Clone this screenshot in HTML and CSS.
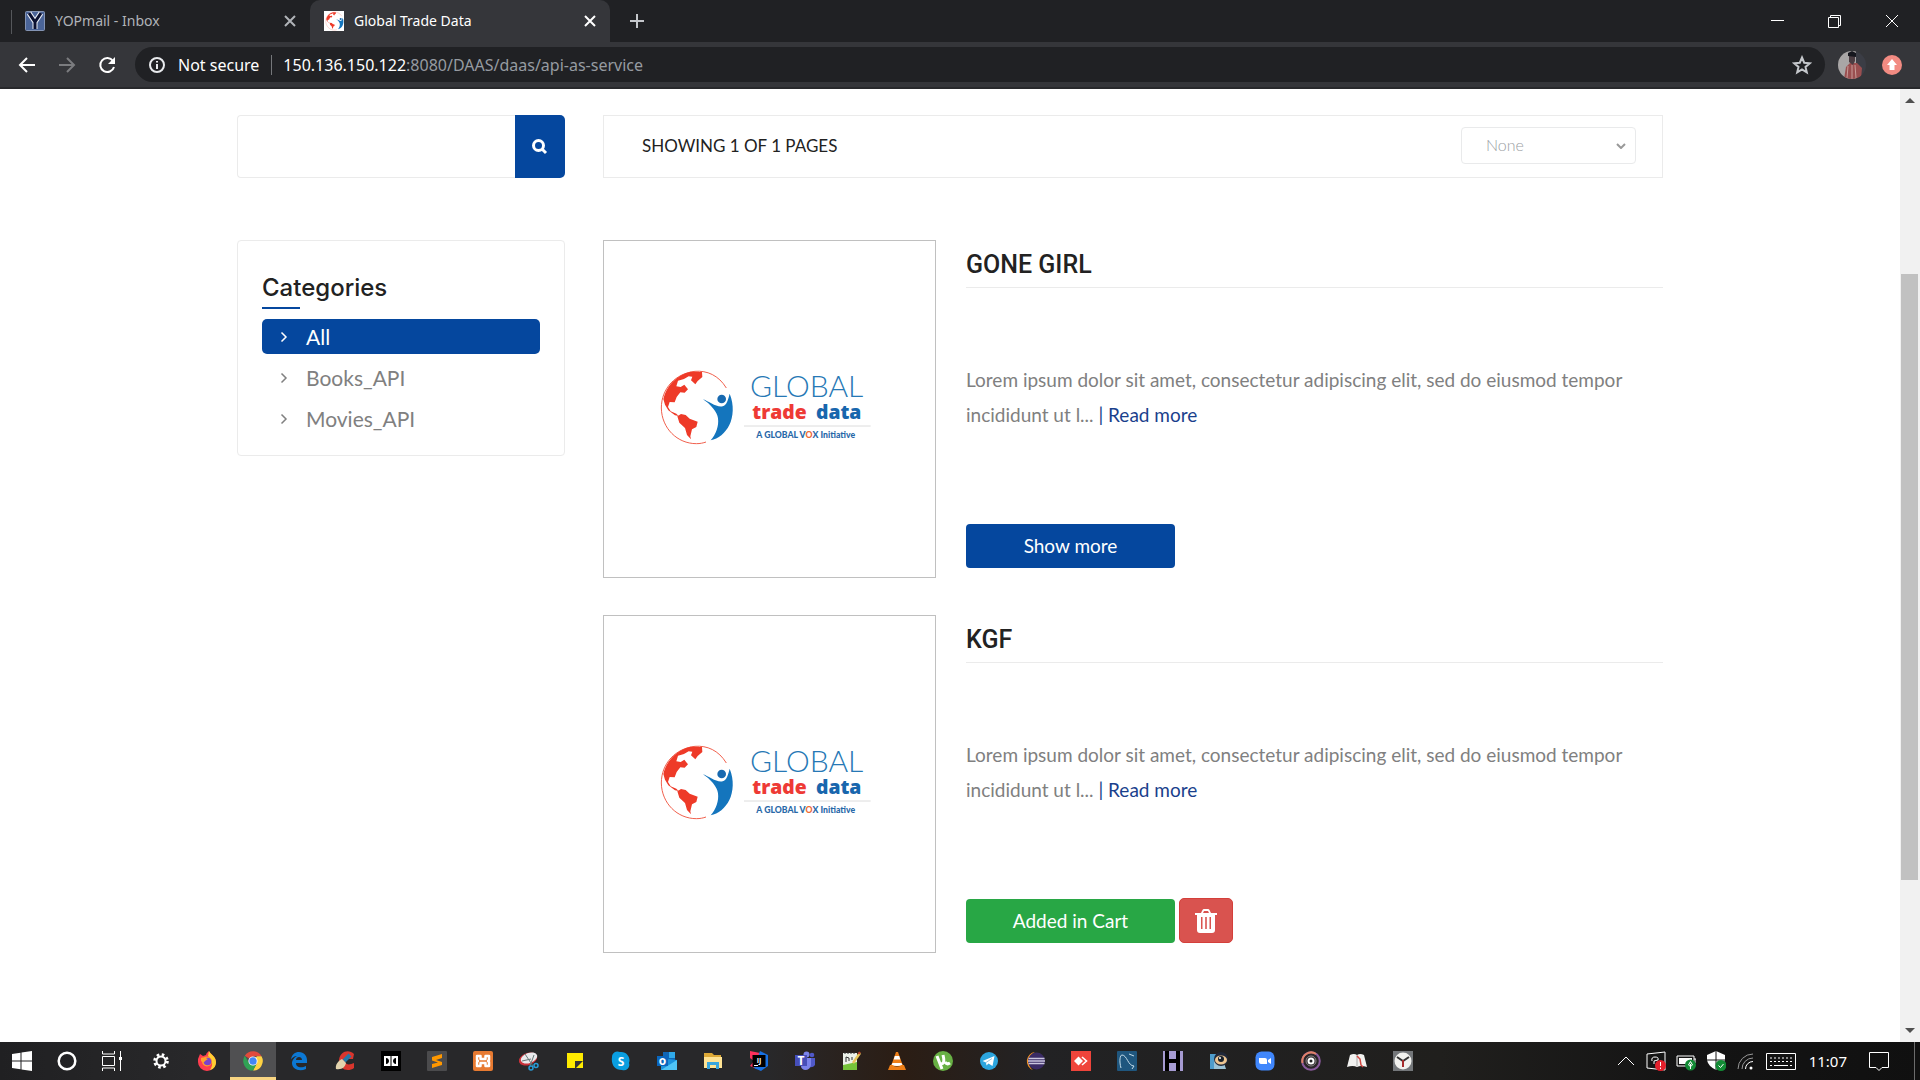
FILE: index.html
```html
<!DOCTYPE html>
<html lang="en">
<head>
<meta charset="utf-8">
<title>Global Trade Data</title>
<link rel="stylesheet" href="styles.css">
</head>
<body>
<svg class="defs" aria-hidden="true">
  <symbol id="globe" viewBox="25 25 230 232">
    <path d="M229 84C206 46 171 31 135 34C78 40 34 84 34 144C35 205 82 251 139 251C150 251 160 249 168 246" fill="none" stroke="#f0604d" stroke-width="3"/>
    <path d="M40 117C49 78 79 45 122 35L156 36L157 51L143 63L136 73L123 61L127 50L116 49L102 57L84 62L79 79L92 81L103 74L114 88L104 98L91 97L80 111L74 127L59 126L54 141L62 154L79 161L86 168L75 166L55 151L45 134Z" fill="#ee3a28"/>
    <path d="M82 169L93 162L107 165L119 176L143 185L139 201L126 208L121 229L123 238L111 225L105 204L88 188Z" fill="#ee3a28"/>
    <circle cx="215" cy="117" r="13" fill="#1769b0"/>
    <path d="M159 118C177 124 199 143 218 139C230 136 235 117 239 101C253 134 250 171 238 195C226 219 205 237 182 241C198 224 207 198 204 175C202 156 181 132 159 118Z" fill="#1475bd"/>
  </symbol>
  <symbol id="chev" viewBox="0 0 8 12"><path d="M1.500 1.500 6 6 1.500 10.500" fill="none" stroke="currentColor" stroke-width="1.500"/></symbol>
</svg>

<header class="browser">
  <div class="tabs">
    <div class="tab">
      <svg class="favicon" viewBox="0 0 20 20"><rect width="20" height="20" rx="2" fill="#8494b4"/><rect x="1" y="1" width="18" height="18" fill="#4a6498"/><path d="M4 2 10 11V18M16 2 10 11" stroke="#e8ecf4" stroke-width="5" fill="none"/><path d="M4 2 10 11V18M16 2 10 11" stroke="#0a1030" stroke-width="3" fill="none"/></svg>
      <span class="tab-title">YOPmail - Inbox</span>
      <button class="tab-close" aria-label="Close tab"><svg viewBox="0 0 12 12"><path d="M1 1 11 11M11 1 1 11"/></svg></button>
    </div>
    <div class="tab tab-active">
      <svg class="favicon" viewBox="0 0 20 20"><rect width="20" height="20" fill="#fff"/><svg x="1" y="0" width="19" height="20"><use href="#globe"/></svg></svg>
      <span class="tab-title">Global Trade Data</span>
      <button class="tab-close" aria-label="Close tab"><svg viewBox="0 0 12 12"><path d="M1 1 11 11M11 1 1 11"/></svg></button>
    </div>
    <button class="new-tab" aria-label="New tab"><svg viewBox="0 0 16 16"><path d="M8 1V15M1 8H15"/></svg></button>
    <div class="window-controls">
      <button aria-label="Minimize"><svg viewBox="0 0 14 14"><path d="M0 6.500H13"/></svg></button>
      <button aria-label="Restore"><svg viewBox="0 0 14 14"><path d="M.5 3.500H10.500V13.500H.5ZM2.500 3.500V1.500H12.500V11.500H10.500"/></svg></button>
      <button aria-label="Close"><svg viewBox="0 0 14 14"><path d="M1 1 13 13M13 1 1 13"/></svg></button>
    </div>
  </div>
  <div class="toolbar">
    <button class="nav" aria-label="Back"><svg viewBox="0 0 20 20"><path d="M18 10H3M10 3 3 10 10 17"/></svg></button>
    <button class="nav nav-off" aria-label="Forward"><svg viewBox="0 0 20 20"><path d="M2 10H17M10 3 17 10 10 17"/></svg></button>
    <button class="nav" aria-label="Reload"><svg viewBox="0 0 20 20"><path d="M16 6A7 7 0 1 0 17 12"/><path d="M18 2V9H11Z" class="solid"/></svg></button>
    <div class="omnibox">
      <svg class="info" viewBox="0 0 18 18"><circle cx="9" cy="9" r="7"/><path d="M9 8V13M9 5V6.500"/></svg>
      <span class="secure">Not secure</span>
      <span class="url"><span class="host">150.136.150.122</span><span>:8080/DAAS/daas/api-as-service</span></span>
      <svg class="star" viewBox="0 0 20 20"><path d="M10 2.500 12.200 7.700 17.800 8.200 13.500 11.900 14.800 17.300 10 14.400 5.200 17.300 6.500 11.900 2.200 8.200 7.800 7.700Z"/></svg>
    </div>
    <svg class="avatar" viewBox="0 0 28 28"><defs><clipPath id="round"><circle cx="14" cy="14" r="14"/></clipPath></defs><g clip-path="url(#round)"><path fill="#a9a6a6" d="M0 0H18V28H0Z"/><path fill="#3b3d45" d="M18 0H28V28H18Z"/><path fill="#9a4f50" d="M6 28 8 16 12 12H19L24 17 23 28Z"/><path d="M10 15 9 27M14 14V28M17 14 18 27" stroke="#c79c98"/><path fill="#4b3d42" d="M11 5H17V10L15 14 11 11Z"/><path fill="#16171e" d="M10 2 14 0 18 2V6L10 5Z"/></g></svg>
    <svg class="update" viewBox="0 0 20 20"><circle cx="10" cy="10" r="10" fill="#f28b82"/><path fill="#fff" d="M10 4 15 10H12.500V15H7.500V10H5Z"/></svg>
  </div>
</header>

<div class="viewport">
  <main class="page">
    <div class="catalog">
      <form class="search">
        <input type="text" aria-label="Search">
        <button type="button" aria-label="Search"><svg viewBox="0 0 16 16"><circle cx="6.500" cy="6.500" r="5"/><path d="M10 10 14 14"/></svg></button>
      </form>
      <div class="results-bar">
        <span>SHOWING 1 OF 1 PAGES</span>
        <div class="sort">
          <select aria-label="Sort by"><option>None</option></select>
          <svg viewBox="0 0 10 6"><path d="M1 1 5 5 9 1"/></svg>
        </div>
      </div>
      <aside class="categories">
        <h2>Categories</h2>
        <ul>
          <li><a class="current" href="#all"><svg><use href="#chev"/></svg>All</a></li>
          <li><a href="#books"><svg><use href="#chev"/></svg>Books_API</a></li>
          <li><a href="#movies"><svg><use href="#chev"/></svg>Movies_API</a></li>
        </ul>
      </aside>
      <div class="products">
        <article class="product">
          <div class="thumb">
            <svg class="brand" viewBox="0 0 690 270">
              <svg x="25" y="25" width="230" height="232"><use href="#globe"/></svg>
              <text x="300" y="110" class="brand-global">GLOBAL</text>
              <text x="307" y="176" class="brand-trade">trade</text>
              <text x="498" y="176" class="brand-data">data</text>
              <path d="M282 198H662" stroke="#dcdcdc" stroke-width="3"/>
              <text x="319" y="234" class="brand-tag">A GLOBAL V<tspan fill="#ee6a35">O</tspan>X Initiative</text>
            </svg>
          </div>
          <div class="details">
            <h3>GONE GIRL</h3>
            <p>Lorem ipsum dolor sit amet, consectetur adipiscing elit, sed do eiusmod tempor incididunt ut l... <a href="#more">| Read more</a></p>
            <div class="actions"><button class="btn">Show more</button></div>
          </div>
        </article>
        <article class="product">
          <div class="thumb">
            <svg class="brand" viewBox="0 0 690 270">
              <svg x="25" y="25" width="230" height="232"><use href="#globe"/></svg>
              <text x="300" y="110" class="brand-global">GLOBAL</text>
              <text x="307" y="176" class="brand-trade">trade</text>
              <text x="498" y="176" class="brand-data">data</text>
              <path d="M282 198H662" stroke="#dcdcdc" stroke-width="3"/>
              <text x="319" y="234" class="brand-tag">A GLOBAL V<tspan fill="#ee6a35">O</tspan>X Initiative</text>
            </svg>
          </div>
          <div class="details">
            <h3>KGF</h3>
            <p>Lorem ipsum dolor sit amet, consectetur adipiscing elit, sed do eiusmod tempor incididunt ut l... <a href="#more">| Read more</a></p>
            <div class="actions">
              <button class="btn btn-added">Added in Cart</button>
              <button class="btn-remove" aria-label="Remove from cart"><svg viewBox="0 0 22 24"><path fill="#fff" fill-rule="evenodd" d="M0 4H6L7.500 1Q8 0 9 0H13Q14 0 14.500 1L16 4H22V6H20V21Q20 24 17 24H5Q2 24 2 21V6H0ZM8 4H14L13 2H9ZM6 8V20H7.500V8ZM10.200 8V20H11.800V8ZM14.500 8V20H16V8Z"/></svg></button>
            </div>
          </div>
        </article>
      </div>
    </div>
  </main>
  <div class="scrollbar">
    <svg viewBox="0 0 10 6"><path d="M0 5 5 0 10 5Z"/></svg>
    <div class="track"><div class="thumb-bar"></div></div>
    <svg viewBox="0 0 10 6"><path d="M0 0 5 5 10 0Z"/></svg>
  </div>
</div>

<footer class="taskbar">
  <div class="apps">
    <button aria-label="Start"><svg viewBox="0 0 20 20"><path fill="#fff" d="M0 3 8.500 1.800V9.500H0ZM9.500 1.600 20 0V9.500H9.500ZM0 10.500H8.500V18.200L0 17ZM9.500 10.500H20V20L9.500 18.400Z"/></svg></button>
    <button aria-label="Cortana"><svg viewBox="0 0 20 20"><circle cx="10" cy="10" r="8.300" fill="none" stroke="#fff" stroke-width="2.500"/></svg></button>
    <button aria-label="Task view"><svg viewBox="0 0 20 20"><path fill="none" stroke="#fff" d="M.5 5.500H12.500V14.500H.5ZM.5 0V3H12.500V0M.5 20V17H12.500V20M18.500 0V20"/><path fill="#fff" d="M17 6H20V9H17Z"/></svg></button>
    <button aria-label="Settings"><svg viewBox="0 0 20 20"><circle cx="10" cy="10" r="6.300" fill="none" stroke="#fff" stroke-width="3" stroke-dasharray="2.500 2.448"/><circle cx="10" cy="10" r="4.500" fill="none" stroke="#fff" stroke-width="2"/></svg></button>
    <button aria-label="Firefox"><svg viewBox="0 0 20 20"><path fill="#ff3d4f" d="M1 8 3 3 6 5 9 4C9 2 11 1 12 0C13 3 19 5 19 11A9 9 0 0 1 1 11Z"/><path fill="#ffcf32" d="M12 0C13 3 19 5 19 11C19 15 17 18 13 19C17 13 15 8 11 5Z"/><circle cx="10" cy="10.500" r="5" fill="#ff9c2a"/><circle cx="10.500" cy="10.500" r="3.800" fill="#7b42cc"/><path fill="#ffa22c" d="M4 7C7 6 9 7 11 8L8 10C7 12 5 11 4 10Z"/></svg></button>
    <button class="running" aria-label="Chrome"><svg viewBox="0 0 20 20"><path fill="#e14a3c" d="M10 10 1.800 4.800A9.600 9.600 0 0 1 18.500 5.300H10Z"/><path fill="#ffd243" d="M10 10 14 5.300H18.500A9.600 9.600 0 0 1 10 19.600L14 12Z"/><path fill="#30a254" d="M1.800 4.800 6 12 10 14H13L10 19.600A9.600 9.600 0 0 1 1.800 4.800Z"/><circle cx="10" cy="10" r="4.600" fill="#fff"/><circle cx="10" cy="10" r="3.700" fill="#4285f4"/></svg></button>
    <button aria-label="Edge"><svg viewBox="0 0 20 20"><path fill="#0c78d4" d="M2 8.500C3 3 6 1 10 1C15 1 18 5 18 9V12H7C7 17 13 17 17 15V18C10 21 3 18 3 12C3 9 6 6 8 5C5 5 3 7 2 8.500ZM7 9H13C13 5 7 5 7 9Z"/></svg></button>
    <button aria-label="CCleaner"><svg viewBox="0 0 20 20"><path fill="#d9362d" d="M19 3 18 8 14 8C11 5 9 8 10 11C11 14 15 14 19 12V17C12 22 3 17 4 9C5 0 14-2 19 3Z"/><path stroke="#2378a8" stroke-width="4" d="M15 4 9 10"/><path fill="#e3d3ad" d="M7 8 11 12C10 16 7 19 1 18C0 14 3 10 7 8Z"/></svg></button>
    <button aria-label="Dolby"><svg viewBox="0 0 20 20"><path fill="#000" d="M0 0H20V20H0Z"/><path fill="#fff" d="M3 5H17V15H3Z"/><path fill="#000" d="M5 7C9 7 9 13 5 13ZM15 7C11 7 11 13 15 13Z"/><path fill="#000" d="M9.500 5H10.500V15H9.500Z"/></svg></button>
    <button aria-label="Sublime Text"><svg viewBox="0 0 20 20"><rect width="20" height="20" rx="1" fill="#4b4b4d"/><path fill="#ff9800" d="M5 6 15 3V7L9 9 15 11V14L5 17V13L11 11.500 5 9.500Z"/></svg></button>
    <button aria-label="XAMPP"><svg viewBox="0 0 20 20"><rect width="20" height="20" rx="2" fill="#e77a31"/><path fill="none" stroke="#fff" stroke-width="2.500" stroke-linejoin="round" d="M4 5H7.500V8H12.500V5H16V9L15 10 16 11V15H12.500V12H7.500V15H4V11L5 10 4 9Z"/></svg></button>
    <button aria-label="Snipping Tool"><svg viewBox="0 0 20 20"><ellipse cx="9" cy="8" rx="9.500" ry="6" transform="rotate(-20 9 8)" fill="#c9313a"/><ellipse cx="10" cy="7" rx="8.500" ry="5" transform="rotate(-20 10 7)" fill="#e9e9ec"/><path stroke="#677" d="M6 3 14 15M15 4 11 15M3 10 12 8" fill="none"/><g fill="none" stroke="#289cd8" stroke-width="1.500"><circle cx="12" cy="17" r="2"/><circle cx="17" cy="14.500" r="2"/></g></svg></button>
    <button aria-label="Sticky Notes"><svg viewBox="0 0 20 20"><path fill="#ffeb00" d="M2 2H18V17H2Z"/><path fill="#333" d="M10 18V10H18Z"/></svg></button>
    <button aria-label="Skype"><svg viewBox="0 0 20 20"><path fill="#0a9ee0" d="M1 6A5.500 5.500 0 0 1 9 1C16 0 20 7 18 12A5.500 5.500 0 0 1 11 19C3 19 0 13 1 6Z"/><text x="10" y="15" class="glyph">S</text></svg></button>
    <button aria-label="Outlook"><svg viewBox="0 0 20 20"><path fill="#1066b5" d="M6 1H18V12H6Z"/><path fill="#30aaea" d="M12 1H18V7H12Z"/><path fill="#1b92dc" d="M4 12 12 8 20 9V19H4Z"/><path fill="#4fc4f5" d="M4 19 20 9V19Z"/><path fill="#0a66bd" d="M0 5H11V15H0Z"/><text x="5.500" y="14" class="glyph">o</text></svg></button>
    <button aria-label="File Explorer"><svg viewBox="0 0 20 20"><path fill="#dda937" d="M1 2H9L11 4H18V8H1Z"/><path fill="#ffe394" d="M1 6H19V17H1Z"/><path fill="#39a6dd" d="M4 11H16V18H13V14H7V18H4Z"/></svg></button>
    <button aria-label="IntelliJ IDEA"><svg viewBox="0 0 20 20"><path fill="#fe315d" d="M1 0 11 2 8 18 1 15 5 10 1 7Z"/><path fill="#1871e3" d="M11 0 19 4V15L12 20 5 17Z"/><path fill="#000" d="M3.500 4H16.500V16H3.500Z"/><text x="10" y="11.500" class="glyph glyph-small">IJ</text><path fill="#fff" d="M5 14H9V15H5Z"/></svg></button>
    <button aria-label="Teams"><svg viewBox="0 0 20 20"><circle cx="17" cy="4" r="2.300" fill="#5059c9"/><circle cx="11.500" cy="3.500" r="3" fill="#7b83eb"/><path fill="#5059c9" d="M14 7H20V14Q18 17 14 16Z"/><path fill="#7b83eb" d="M6 7H16V14Q15 19 10 19Q6 18 6 15Z"/><path fill="#464eb8" d="M0 4H12V15H0Z"/><text x="6" y="13.500" class="glyph">T</text></svg></button>
    <button aria-label="Notepad++"><svg viewBox="0 0 20 20"><path fill="#edf2ea" d="M2 2H16V19H2Z"/><path fill="#76c43a" d="M2 14 16 11V19H2Z"/><path stroke="#333" fill="none" d="M4 3V1M7 3V1M10 3V1M13 3V1M5 11V6L8 7V10M11 6V9"/><path stroke="#e7c65b" stroke-width="2.500" d="M19 2 12 12"/><path stroke="#bd3e27" stroke-width="2" d="M19 1 17.500 3"/></svg></button>
    <button aria-label="VLC"><svg viewBox="0 0 20 20"><path fill="#ee7f18" d="M9 1H11L16 15H4Z"/><path fill="#fff" d="M7.800 5H12.200L13.300 8.500H6.700ZM5.500 12H14.500L15.500 14Q10 16 4.500 14Z"/><path fill="#ee7f18" d="M3 14H5Q10 17 15 14H17L19 19H1Z"/></svg></button>
    <button aria-label="uTorrent"><svg viewBox="0 0 20 20"><circle cx="10" cy="10" r="10" fill="#68b044"/><path fill="none" stroke="#fff" stroke-width="3" d="M4 5 9 18M6.500 12C10 14 12 12 10 4M12 11Q14 14 17 12"/></svg></button>
    <button aria-label="Telegram"><svg viewBox="0 0 20 20"><circle cx="10" cy="10" r="9" fill="#2ca5de"/><path fill="#fff" d="M3.500 10 15.500 5 13.500 15 9.500 12.500 7.500 14.500 7 11.500Z"/><path stroke="#9cc8df" d="M7 11.500 13 7.500"/></svg></button>
    <button aria-label="Eclipse"><svg viewBox="0 0 20 20"><path fill="#f79424" d="M10 1A9.300 9.300 0 0 0 8 19C2 15 2 5 10 1Z"/><circle cx="11.500" cy="10" r="8.500" fill="#3a2b65"/><path stroke="#cac6df" stroke-width="1.500" d="M3.500 7.500H19.500M3 10H20M3.500 12.500H19.500"/></svg></button>
    <button aria-label="AnyDesk"><svg viewBox="0 0 20 20"><path fill="#ef443b" d="M0 0H20V20H0Z"/><path fill="#fff" d="M3 10 7.500 5.500 12 10 7.500 14.500Z"/><path fill="none" stroke="#fff" stroke-width="1.600" d="M11 6 15.500 10 11 14"/></svg></button>
    <button aria-label="MySQL Workbench"><svg viewBox="0 0 20 20"><rect width="20" height="20" rx="1" fill="#1f567e"/><path fill="none" stroke="#c4dce9" d="M4 17C2 10 3 4 5 4C10 4 11 15 17 15L15 18M12 3 17 5"/></svg></button>
    <button aria-label="HeidiSQL"><svg viewBox="0 0 20 20"><path fill="#a69bd2" d="M0 0H20V20H0Z"/><path fill="#000" d="M2 0H6V8H13V0H17V20H13V12H6V20H2Z"/></svg></button>
    <button aria-label="Image Viewer"><svg viewBox="0 0 20 20"><path fill="#4e9ccb" d="M1 3H8V18H1Z"/><path fill="#9cc3d6" d="M5 9 12 3 17 18H5Z"/><circle cx="12" cy="8" r="7" fill="#202839"/><ellipse cx="12" cy="9" rx="6" ry="4.500" fill="#edc591"/><circle cx="12" cy="8" r="3" fill="#17202b"/><circle cx="11" cy="7" r="1" fill="#fff"/></svg></button>
    <button aria-label="Zoom"><svg viewBox="0 0 20 20"><rect x=".5" y=".5" width="19" height="19" rx="6" fill="#4087fc"/><path fill="#fff" d="M4 7H10Q12 7 12 9V13H6Q4 13 4 11ZM13 9 16 7V13L13 11Z"/></svg></button>
    <button aria-label="Music"><svg viewBox="0 0 20 20"><circle cx="10" cy="10" r="8.800" fill="#2a2628" stroke="#8a5a9c" stroke-width="2"/><path fill="none" stroke="#e18167" stroke-width="2" d="M1.500 12A8.800 8.800 0 0 1 15 3"/><circle cx="10" cy="10" r="5" fill="none" stroke="#8d8689"/><circle cx="10" cy="10" r="3.500" fill="#fff"/><circle cx="10" cy="10" r="1.500" fill="#222"/></svg></button>
    <button aria-label="Reader"><svg viewBox="0 0 20 20"><path fill="#f2f2f0" d="M3 4Q7 2 10 4Q13 2 17 4L20 16Q14 14 10 16Q6 14 0 16Z"/><path stroke="#aaa" d="M10 4V15"/><path fill="none" stroke="#d04640" stroke-width="1.500" d="M10 5 13 8 14 14 16 16"/></svg></button>
    <button aria-label="Clock"><svg viewBox="0 0 20 20"><path fill="#74777a" d="M0 0H20V20H0Z"/><circle cx="10" cy="10" r="8.500" fill="#f1f1ee"/><path stroke="#333" stroke-width="2" fill="none" d="M4 6 10 10 16 6"/><path stroke="#a72c2c" stroke-width="2" d="M10 9V16"/></svg></button>
  </div>
  <div class="tray">
    <svg viewBox="0 0 20 20"><path d="M2 14 10 6 18 14"/></svg>
    <svg viewBox="0 0 20 20"><path d="M1 3 19 1V19L1 17ZM6 10Q5 6 9 6Q13 6 12 9L8 10V13"/><circle cx="14.500" cy="14.500" r="5.500" class="red"/><path d="M14.500 11V15M14.500 16.500V18"/></svg>
    <svg viewBox="0 0 20 20"><path d="M1 5H18V15H1ZM18 8H20V12"/><path class="white" d="M3 7H16V13H3Z"/><circle cx="14.500" cy="14" r="5.500" class="green"/><path d="M14.500 10.500 12.500 14Q14.500 17 16.500 14ZM14.500 13V18"/></svg>
    <svg viewBox="0 0 20 20"><path class="white" d="M10 0 19 4V9Q17 16 10 19Q2 15 1 9V4Z"/><path class="gap" d="M10 0V19M1 9H19"/><circle cx="15" cy="14.500" r="5.500" class="green"/><path d="M12.500 14.500 14.500 16.500 17.500 13"/></svg>
    <svg viewBox="0 0 20 20"><path class="faint" d="M2 18A15 15 0 0 1 17 3M6 18A11 11 0 0 1 17 7"/><path d="M9.500 18A7.500 7.500 0 0 1 17 10.500"/><circle cx="15" cy="17" r="1.500" class="white"/></svg>
    <svg class="keyboard" viewBox="0 0 30 18"><path d="M.5 1.500H29.500V17.500H.5Z"/><path d="M4 6H27M4 9.500H27" stroke-dasharray="2 2"/><path d="M4 13.500H6M8 13.500H22M24 13.500H26"/></svg>
    <time>11:07</time>
    <svg class="notice" viewBox="0 0 20 20"><path d="M.5 1.500H19.500V16.500H13L10 19.500 7 16.500H.5Z"/></svg>
  </div>
</footer>
</body>
</html>
```
FILE: styles.css
```css
* { box-sizing: border-box; }
body {
  margin: 0;
  min-height: 100vh;
  display: flex;
  flex-direction: column;
  background: #fff;
  font-family: Lato, "Open Sans", sans-serif;
}
button { border: 0; padding: 0; background: none; font: inherit; color: inherit; }
svg { display: block; flex: none; }
.defs { position: absolute; width: 0; height: 0; }

/* browser chrome */
.browser {
  background: #202124;
  color: #fff;
  font-family: "Noto Sans", sans-serif;
  border-bottom: 2px solid #28292c;
}
.tabs { display: flex; align-items: center; height: 42px; padding-left: 10px; }
.tab {
  display: flex;
  align-items: center;
  gap: 10px;
  flex: 0 1 300px;
  height: 42px;
  padding: 0 14px;
  color: #b0b3b8;
  font-size: 14px;
}
.tab:first-child { border-left: 1px solid #202124; background: linear-gradient(#55575b, #55575b) 0 10px / 1px 24px no-repeat; }
.tab-active { background: #35363a; border-radius: 10px 10px 0 0; color: #fff; }
.favicon { width: 20px; height: 20px; }
.tab-title { flex: 1; padding-bottom: 2px; }
.tab-close svg { width: 12px; height: 12px; }
.tab-close, .new-tab, .window-controls button { display: grid; place-items: center; }
.tab-close path, .new-tab path, .nav path { fill: none; stroke: currentColor; stroke-width: 2; }
.new-tab { width: 54px; color: #c4c7cb; }
.new-tab svg { width: 16px; height: 16px; }
.window-controls { display: flex; margin-left: auto; height: 36px; }
.window-controls button { width: 57px; }
.window-controls svg { width: 14px; height: 14px; }
.window-controls path { fill: none; stroke: currentColor; }
.toolbar {
  display: flex;
  align-items: center;
  height: 45px;
  padding: 0 16px 0 15px;
  background: #35363a;
}
.nav { width: 40px; padding-left: 2px; }
.nav svg { width: 20px; height: 20px; }
.nav-off { color: #7b7c7f; }
.nav .solid { fill: currentColor; stroke: none; }
.omnibox {
  display: flex;
  align-items: center;
  flex: 1;
  height: 35px;
  padding: 0 13px;
  border-radius: 18px;
  background: #202124;
  font-size: 16px;
}
.info { width: 18px; height: 18px; margin-right: 12px; fill: none; stroke: #e8eaed; stroke-width: 2; }
.secure { padding-right: 12px; border-right: 1px solid #75777a; margin-right: 11px; line-height: 20px; }
.url { display: flex; flex: 1; color: #969ba1; }
.host { color: #fff; }
.star { width: 20px; height: 20px; fill: none; stroke: #c4c7cb; stroke-width: 2; }
.avatar { width: 28px; height: 28px; margin: 0 16px 0 13px; }
.update { width: 20px; height: 20px; margin-right: 2px; }

/* page */
.viewport { flex: 1; display: flex; }
.page { flex: 1; padding: 26px 0; }
.catalog {
  display: grid;
  grid-template-columns: 328px 1fr;
  column-gap: 38px;
  row-gap: 62px;
  width: 90%;
  max-width: 1426px;
  margin: 0 auto;
  align-items: start;
}
.search { display: flex; height: 63px; }
.search input {
  flex: 1;
  min-width: 0;
  padding: 0 20px;
  border: 1px solid #ebebeb;
  border-right: 0;
  border-radius: 4px 0 0 4px;
  font: 18px Lato, sans-serif;
}
.search button {
  display: grid;
  place-items: center;
  width: 50px;
  border-radius: 0 5px 5px 0;
  background: #05479e;
}
.search svg { width: 16px; height: 16px; fill: none; stroke: #fff; stroke-width: 3; }
.results-bar {
  display: flex;
  align-items: center;
  justify-content: space-between;
  height: 63px;
  padding: 0 26px 2px 38px;
  border: 1px solid #ebebeb;
  color: #222;
  font-size: 17px;
}
.sort { position: relative; }
.sort select {
  appearance: none;
  width: 175px;
  height: 37px;
  padding: 0 24px 2px;
  border: 1px solid #e9eaeb;
  border-radius: 4px;
  background: #fff;
  color: #9a9ea3;
  font: 300 16px Lato, sans-serif;
}
.sort svg { position: absolute; right: 10px; top: 16px; width: 10px; height: 6px; fill: none; stroke: #999; stroke-width: 2; pointer-events: none; }
.categories { padding: 30px 24px 19px; border: 1px solid #ebebeb; border-radius: 4px; }
.categories h2 {
  margin: 0 0 10px;
  color: #222;
  font: 500 24px/34px Inter, sans-serif;
}
.categories h2::after { content: ""; display: block; width: 38px; height: 2px; margin-top: 2px; background: #05479e; }
.categories ul { display: grid; gap: 6px; margin: 0; padding: 0; list-style: none; }
.categories a {
  display: flex;
  align-items: center;
  gap: 18px;
  height: 35px;
  padding: 0 18px;
  border-radius: 5px;
  color: #808080;
  font-size: 21px;
  text-decoration: none;
}
.categories a svg { width: 8px; height: 12px; }
.categories .current { background: #05479e; color: #fff; }
.products { display: grid; gap: 37px; }
.product { display: grid; grid-template-columns: 333px 1fr; gap: 30px; }
.thumb { height: 338px; padding: 119px 0 0 46px; border: 1px solid #c0c0c0; }
.brand { width: 230px; height: 90px; }
.brand-global { font: 300 90px Lato, sans-serif; fill: #2678b5; }
.brand-trade, .brand-data { font: 800 58px "Open Sans", sans-serif; fill: #1866ad; }
.brand-trade { fill: #ee3a35; }
.brand-tag { font: 900 26px Lato, sans-serif; fill: #2868a8; }
.details h3 {
  margin: 0;
  padding-top: 2px;
  border-bottom: 1px solid #ebebeb;
  color: #222;
  font: 500 25px/45px Roboto, sans-serif;
}
.details p { margin: 74px 0 92px; color: #808080; font-size: 19px; line-height: 35px; }
.details p a { color: #1a3f8c; text-decoration: none; }
.actions { display: flex; align-items: end; gap: 4px; height: 44px; }
.btn { width: 209px; height: 44px; padding-bottom: 2px; border-radius: 4px; background: #05479e; color: #fff; font-size: 19px; }
.btn-added { background: #28a745; }
.btn-remove {
  display: grid;
  place-items: center;
  width: 54px;
  height: 45px;
  border: 1px solid #d43f3a;
  border-radius: 5px;
  background: #d9534f;
}
.btn-remove svg { width: 22px; height: 24px; }
.scrollbar {
  display: flex;
  flex-direction: column;
  align-items: center;
  width: 20px;
  padding: 9px 1px 8px 0;
  background: #f1f1f1;
}
.scrollbar > svg { width: 10px; height: 6px; fill: #505050; }
.track { flex: 1; width: 17px; padding-top: 170px; }
.thumb-bar { height: 606px; background: #c1c1c1; }

/* desktop taskbar */
.taskbar { display: flex; justify-content: space-between; height: 38px; background: linear-gradient(90deg, #202022 0, #28282a 10%, #28282a 40%, #2b1d14 47%, #222224 54%, #201f1d 75%, #141414 88%, #101010); }
.apps { display: flex; padding-right: 1px; }
.apps button { display: grid; place-items: center; width: 46px; }
.apps button:first-child { width: 44px; }
.apps button:nth-child(3) { width: 48px; padding-right: 4px; }
.apps svg, .tray svg { width: 20px; height: 20px; }
.apps .running { background: #505052; border-bottom: 3px solid #f8d582; padding-top: 3px; }
.glyph { font: 700 12px "Open Sans", sans-serif; fill: #fff; text-anchor: middle; }
.glyph-small { font-size: 7px; }
.tray { display: flex; align-items: center; gap: 10px; margin-right: 5px; padding-right: 25px; border-right: 1px solid #6b6b6b; color: #fff; font: 15px "Noto Sans", sans-serif; }
.tray svg { fill: none; stroke: #fff; stroke-width: 1; }
.tray .keyboard { width: 30px; height: 18px; margin-right: 3px; }
.tray .notice { margin-left: 12px; }
.tray .white { fill: #fff; stroke: none; }
.tray .red { fill: #e5202c; stroke: none; }
.tray .green { fill: #128b35; stroke: none; }
.tray .gap { stroke: #141414; }
.tray .faint { stroke: #999; }
```
